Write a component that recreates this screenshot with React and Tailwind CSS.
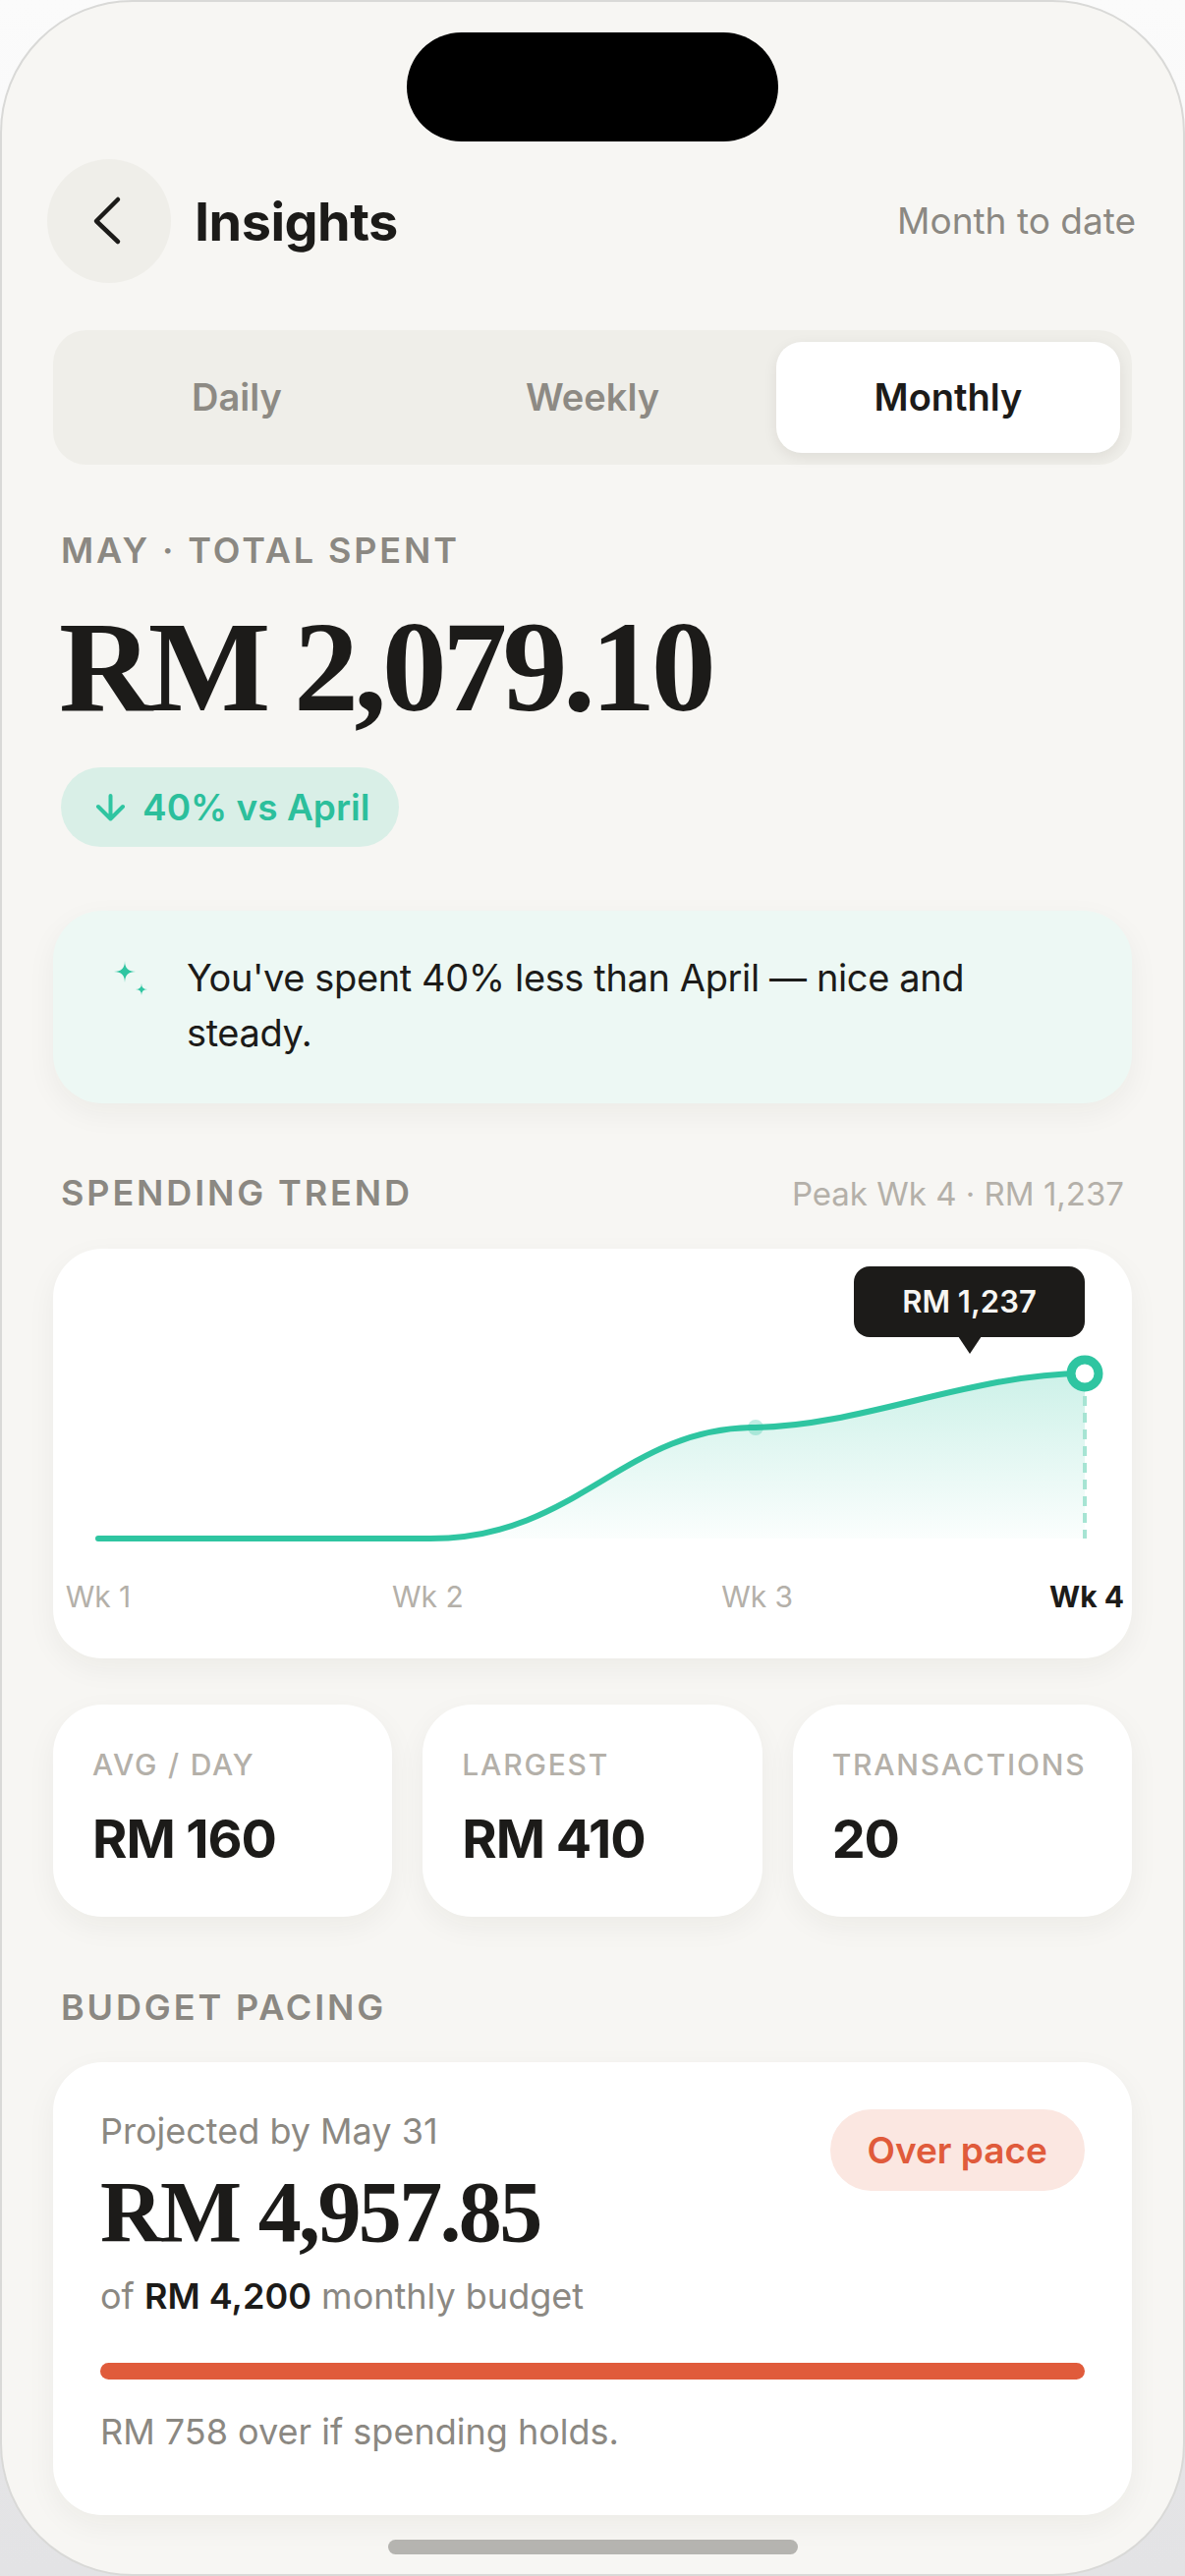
import React from 'react';

const TEAL = '#2fc5a1';

const Label = ({ children, className = '' }) => (
  <div className={`text-[36px] leading-none font-semibold tracking-[0.08em] text-[#8b8882] uppercase ${className}`}>
    {children}
  </div>
);

const StatCard = ({ label, value }) => (
  <div className="h-[216px] rounded-[50px] bg-white pl-[40px] pt-[46px] shadow-[0_10px_30px_rgba(40,30,10,0.05)]">
    <div className="text-[30px] leading-none font-medium tracking-[0.06em] text-[#b4b0a9]">{label}</div>
    <div className="mt-[34px] text-[54px] leading-none font-bold tracking-[-0.02em] text-[#1c1b19]">{value}</div>
  </div>
);

const Sparkle = () => (
  <svg width="40" height="40" viewBox="0 0 40 40" className="mt-[9px] shrink-0">
    <path d="M15 2 Q15 13 26 13 Q15 13 15 24 Q15 13 4 13 Q15 13 15 2 Z" fill={TEAL} />
    <path d="M32 25 Q32 31 38 31 Q32 31 32 37 Q32 31 26 31 Q32 31 32 25 Z" fill={TEAL} />
  </svg>
);

const TrendChart = () => {
  const curve = 'M384 295 C534 295 580 182 715 182 C825 180 935 127 1050 127';
  return (
    <div className="relative mt-[39px] h-[417px] rounded-[50px] bg-white shadow-[0_10px_30px_rgba(40,30,10,0.05)]">
      <svg width="1097" height="339" viewBox="0 0 1097 339" className="block">
        <defs>
          <linearGradient id="trendFill" x1="0" y1="127" x2="0" y2="295" gradientUnits="userSpaceOnUse">
            <stop offset="0" stopColor={TEAL} stopOpacity="0.24" />
            <stop offset="1" stopColor={TEAL} stopOpacity="0.02" />
          </linearGradient>
        </defs>
        <path d={`${curve} L1050 295 L384 295 Z`} fill="url(#trendFill)" />
        <line x1="1050" y1="150" x2="1050" y2="295" stroke="#a6e4d3" strokeWidth="4" strokeDasharray="10 7" />
        <path d={`M46 295 L384 295 ${curve.slice(curve.indexOf('C'))}`} fill="none" stroke={TEAL} strokeWidth="6" strokeLinecap="round" />
        <circle cx="715" cy="182" r="8" fill={TEAL} opacity="0.3" />
        <circle cx="1050" cy="127" r="14" fill="#fff" stroke={TEAL} strokeWidth="9" />
      </svg>

      {/* tooltip */}
      <div className="absolute left-[815px] top-[18px] flex flex-col items-center">
        <div className="w-[235px] h-[72px] rounded-[16px] bg-[#1c1b19] flex items-center justify-center text-[31px] font-semibold text-[#f7f6f3]">
          RM 1,237
        </div>
        <div className="-mt-px w-0 h-0 border-l-[12px] border-r-[12px] border-t-[18px] border-l-transparent border-r-transparent border-t-[#1c1b19]" />
      </div>

      <div className="flex justify-between px-[6px] text-[30px] leading-none text-[#b4b0a9]">
        <span className="w-[80px] text-center">Wk 1</span>
        <span className="w-[80px] text-center">Wk 2</span>
        <span className="w-[80px] text-center">Wk 3</span>
        <span className="w-[80px] text-center font-bold text-[#1c1b19]">Wk 4</span>
      </div>
    </div>
  );
};

export default function App() {
  return (
    <div className="w-[1206px] h-[2622px] bg-gradient-to-b from-[#fbfbfb] to-[#e3e3e5] font-['Inter','Noto_Sans',sans-serif]">
      <div className="h-full rounded-[135px] border-2 border-[#d9d9d7] bg-[#f7f6f3] overflow-hidden flex flex-col">
        {/* dynamic island */}
        <div className="mt-[31px] mx-auto w-[378px] h-[111px] rounded-full bg-black shrink-0" />

        {/* header */}
        <div className="mt-[18px] h-[126px] flex items-center pl-[46px] pr-[48px]">
          <div className="w-[126px] h-[126px] rounded-full bg-[#efeee9] shrink-0">
            <svg width="126" height="126" viewBox="0 0 126 126" fill="none">
              <path d="M72 41 L50 63 L72 84" stroke="#1c1b19" strokeWidth="4.5" strokeLinecap="round" strokeLinejoin="round" />
            </svg>
          </div>
          <h1 className="ml-[24px] text-[54px] font-bold tracking-[-0.01em] text-[#1c1b19]">Insights</h1>
          <span className="ml-auto text-[37px] text-[#8b8882]">Month to date</span>
        </div>

        <div className="px-[52px] flex flex-col">
          {/* segmented control */}
          <div className="mt-[48px] h-[137px] rounded-[34px] bg-[#efeee9] p-[12px] grid grid-cols-3 gap-[12px]">
            <div className="flex items-center justify-center text-[38px] font-semibold text-[#8d8a84]">Daily</div>
            <div className="flex items-center justify-center text-[38px] font-semibold text-[#8d8a84]">Weekly</div>
            <div className="flex items-center justify-center rounded-[26px] bg-white text-[38px] font-semibold text-[#1c1b19] shadow-[0_4px_14px_rgba(40,30,10,0.08)]">
              Monthly
            </div>
          </div>

          {/* total spent */}
          <Label className="mt-[69px] pl-[8px]">May · Total spent</Label>
          <div className="mt-[35px] pl-[6px] font-['Liberation_Serif',serif] text-[132px] leading-none font-bold tracking-[-0.035em] text-[#1c1b19]">
            RM 2,079.10
          </div>
          <div className="mt-[36px] ml-[8px] self-start h-[81px] rounded-full bg-[#d9efe7] pl-[35px] pr-[30px] flex items-center gap-[17px]">
            <svg width="31" height="28" viewBox="0 0 31 28" fill="none">
              <path d="M15.5 2 V25 M3 13 L15.5 25.5 L28 13" stroke={TEAL} strokeWidth="4" strokeLinecap="round" strokeLinejoin="round" />
            </svg>
            <span className="text-[37px] font-semibold text-[#2cbf9c]">40% vs April</span>
          </div>

          {/* insight */}
          <div className="mt-[65px] h-[196px] rounded-[50px] bg-[#edf8f4] pl-[58px] pr-[40px] pt-[40px] flex items-start gap-[38px] shadow-[0_10px_30px_rgba(40,30,10,0.05)]">
            <Sparkle />
            <p className="text-[38px] leading-[56px] tracking-[-0.01em] text-[#1c1b19]">
              You've spent 40% less than April — nice and steady.
            </p>
          </div>

          {/* spending trend */}
          <div className="mt-[73px] px-[8px] flex items-baseline justify-between">
            <Label>Spending trend</Label>
            <span className="text-[33px] leading-none text-[#b4b0a9]">Peak Wk 4 · RM 1,237</span>
          </div>
          <TrendChart />

          {/* stats */}
          <div className="mt-[47px] grid grid-cols-3 gap-[31px]">
            <StatCard label="AVG / DAY" value="RM 160" />
            <StatCard label="LARGEST" value="RM 410" />
            <StatCard label="TRANSACTIONS" value="20" />
          </div>

          {/* budget pacing */}
          <Label className="mt-[74px] pl-[8px]">Budget pacing</Label>
          <div className="mt-[38px] h-[461px] rounded-[50px] bg-white px-[48px] pt-[48px] shadow-[0_10px_30px_rgba(40,30,10,0.05)]">
            <div className="flex items-start justify-between">
              <div>
                <div className="mt-[4px] text-[36px] leading-none text-[#8b8882]">Projected by May 31</div>
                <div className="mt-[21px] font-['Liberation_Serif',serif] text-[88px] leading-none font-bold tracking-[-0.03em] text-[#1c1b19]">
                  RM 4,957.85
                </div>
                <div className="mt-[23px] text-[36px] leading-none text-[#8b8882]">
                  of <span className="font-semibold text-[#1c1b19]">RM 4,200</span> monthly budget
                </div>
              </div>
              <div className="h-[83px] px-[38px] rounded-full bg-[#fbe7e1] flex items-center text-[37px] font-semibold text-[#e05b3b]">
                Over pace
              </div>
            </div>
            <div className="mt-[50px] h-[17px] rounded-full bg-[#e05b3b]" />
            <div className="mt-[35px] text-[36px] leading-none text-[#8b8882]">RM 758 over if spending holds.</div>
          </div>

          {/* home indicator */}
          <div className="mt-[25px] mx-auto w-[417px] h-[15px] rounded-full bg-[#b5b4b0]" />
        </div>
      </div>
    </div>
  );
}
